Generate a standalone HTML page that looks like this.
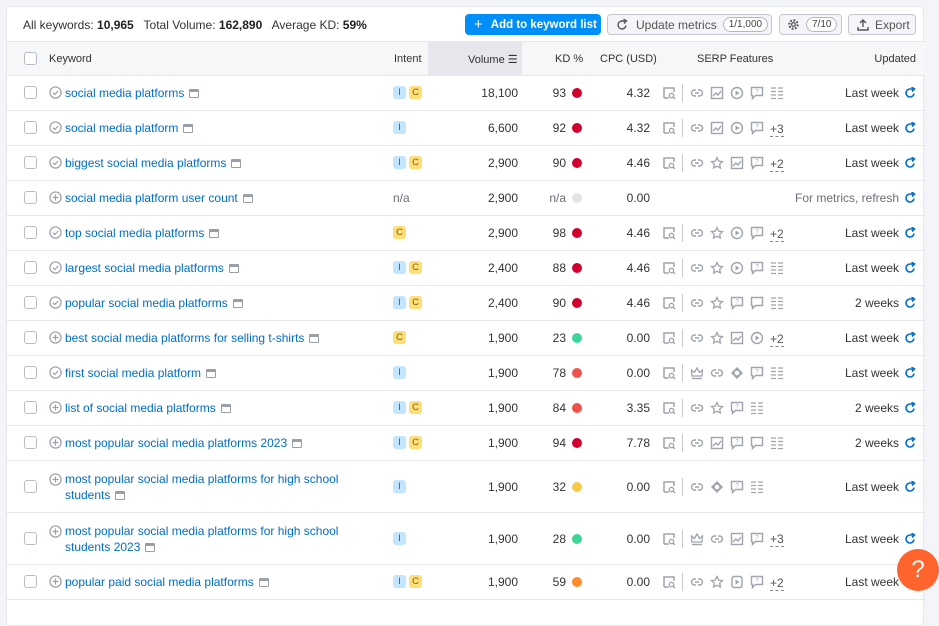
<!DOCTYPE html>
<html><head><meta charset="utf-8"><style>
*{box-sizing:border-box;margin:0;padding:0}
body{width:939px;height:604px;overflow:hidden;background:#f4f5f9;font-family:"Liberation Sans",sans-serif;font-size:12px;color:#333}
.card{position:absolute;left:6px;top:6px;width:918px;height:620px;background:#fff;border:1px solid #e6e7eb;border-radius:4px}
.tb{position:absolute;left:0;top:0;width:918px;height:34px}
.stats{position:absolute;left:16px;top:11px;font-size:12px;color:#333}
.stats b{color:#222}
.btn{position:absolute;top:7px;height:21px;border-radius:4px;font-size:12px;display:flex;align-items:center;white-space:nowrap}
.blue{left:458px;width:136px;background:#008ff8;color:#fff;font-weight:bold;padding-left:9px;font-size:11.5px}
.gb{border:1px solid #c4c7cf;background:#f4f5f9;color:#555}
.pill{border:1px solid #b5b8c0;border-radius:9px;font-size:10px;padding:1px 5px;background:#fff;margin-left:6px;color:#444}
.hdr{position:absolute;left:0;top:34px;width:918px;height:35px;background:#f6f7f9;border-top:1px solid #e6e7eb;border-bottom:1px solid #e6e7eb;font-size:11px;color:#333}
.hdr span{position:absolute;top:11px}
.volh{position:absolute;left:421px;top:0;width:94px;height:34px;background:#e6e7ec}
.row{position:absolute;left:0;width:918px;border-bottom:1px solid #e6e7eb}
.row>*{position:absolute}
.cb{position:absolute;left:17px;width:13px;height:13px;border:1px solid #b8bbc2;border-radius:3px;background:#fff;top:50%;margin-top:-7px}
.ki{left:42px;width:13px;height:13px;top:10px}
.kw{left:58px;top:9px;color:#006dca;line-height:16px;width:290px}
.tall .kw{top:10px}
.tall .ki{top:12px}
.sv{display:inline-block;width:10px;height:9px;border:1px solid #9a9ea6;border-top-width:3px;border-radius:1px;vertical-align:-1px;margin-left:5px}
.int{left:386px;top:50%;margin-top:-7px;display:flex;gap:3px}
.bI,.bC{width:13px;height:13px;border-radius:3px;font-size:9.5px;line-height:13px;text-align:center}
.bI{background:#c4e5fe;color:#006dca}
.bC{background:#fcdf78;color:#8a5b00}
.na{left:386px;top:50%;margin-top:-7px;color:#6c6e79}
.vol{left:421px;width:90px;text-align:right;top:50%;margin-top:-7px}
.kd{left:515px;width:44px;text-align:right;top:50%;margin-top:-7px}
.dot{left:565px;width:10px;height:10px;border-radius:50%;top:50%;margin-top:-5px}
.cpc{left:579px;width:64px;text-align:right;top:50%;margin-top:-7px}
.serp{left:655px;top:50%;margin-top:-8px;display:flex;align-items:center;height:16px}
.serp svg{width:14px;height:14px;margin-right:6px}
.sep{width:1px;height:18px;background:#c8cad0;margin:0 7px 0 0}
.more{font-size:12px;color:#555;border-bottom:1px dashed #888;line-height:13px;margin-top:3px}
.upd{right:9px;top:50%;margin-top:-7px;display:flex;align-items:center;gap:5px}
.upd svg{width:12px;height:12px}
.help{position:absolute;left:897px;top:549px;width:42px;height:42px;border-radius:50%;background:#ff642d;color:#fff;font-size:24px;text-align:center;line-height:42px}
</style></head><body>
<svg width="0" height="0" style="position:absolute">
<defs>
<symbol id="sn" viewBox="0 0 14 14"><path d="M2 12V2h10v4M2 12h5" fill="none" stroke="#a0a4ad" stroke-width="1.5"/><circle cx="9.5" cy="9.5" r="2.2" fill="none" stroke="#a0a4ad" stroke-width="1.3"/><path d="M11 11l2 2" stroke="#a0a4ad" stroke-width="1.3"/></symbol>
<symbol id="ln" viewBox="0 0 14 14"><path d="M6 4H4.5a3 3 0 000 6H6M8 4h1.5a3 3 0 010 6H8M5 7h4" fill="none" stroke="#a0a4ad" stroke-width="1.4"/></symbol>
<symbol id="im" viewBox="0 0 14 14"><rect x="1.5" y="1.5" width="11" height="11" fill="none" stroke="#a0a4ad" stroke-width="1.4"/><path d="M3 10l3-3 2 2 3-4" fill="none" stroke="#a0a4ad" stroke-width="1.4"/></symbol>
<symbol id="pl" viewBox="0 0 14 14"><circle cx="7" cy="7" r="5.5" fill="none" stroke="#a0a4ad" stroke-width="1.4"/><path d="M5.5 4.5v5l4-2.5z" fill="#a0a4ad"/></symbol>
<symbol id="fq" viewBox="0 0 14 14"><path d="M1.5 1.5h11v8h-7l-3 3v-3h-1z" fill="none" stroke="#a0a4ad" stroke-width="1.4"/><text x="7" y="7.5" font-size="6" text-anchor="middle" fill="#a0a4ad" font-family="Liberation Sans">?</text></symbol>
<symbol id="cm" viewBox="0 0 14 14"><path d="M1.5 1.5h11v8h-7l-3 3v-3h-1z" fill="none" stroke="#a0a4ad" stroke-width="1.4"/></symbol>
<symbol id="ls" viewBox="0 0 14 14"><path d="M1 2h5M8 2h5M1 5.5h5M8 5.5h5M1 9h5M8 9h5M1 12.5h5M8 12.5h5" stroke="#a0a4ad" stroke-width="1.3"/></symbol>
<symbol id="st" viewBox="0 0 14 14"><path d="M7 1.5l1.7 3.6 3.8.5-2.8 2.6.7 3.8L7 10.2 3.6 12l.7-3.8L1.5 5.6l3.8-.5z" fill="none" stroke="#a0a4ad" stroke-width="1.3"/></symbol>
<symbol id="cr" viewBox="0 0 14 14"><path d="M2 10L1.5 4l3 2.5L7 2l2.5 4.5 3-2.5L12 10z" fill="none" stroke="#a0a4ad" stroke-width="1.3"/><path d="M2 12.5h10" stroke="#a0a4ad" stroke-width="1.4"/></symbol>
<symbol id="dm" viewBox="0 0 14 14"><path d="M7 1l6 6-6 6-6-6z" fill="#a0a4ad"/><circle cx="7" cy="7" r="2.3" fill="#fff"/></symbol>
<symbol id="vd" viewBox="0 0 14 14"><rect x="2" y="1.5" width="10" height="11" rx="2" fill="none" stroke="#a0a4ad" stroke-width="1.4"/><path d="M5.5 4.5v5l4-2.5z" fill="#a0a4ad"/></symbol>
<symbol id="ck" viewBox="0 0 14 14"><circle cx="7" cy="7" r="6" fill="none" stroke="#9a9ea6" stroke-width="1.3"/><path d="M4.2 7.2l2 2 3.6-3.8" fill="none" stroke="#9a9ea6" stroke-width="1.3"/></symbol>
<symbol id="pc" viewBox="0 0 14 14"><circle cx="7" cy="7" r="6" fill="none" stroke="#9a9ea6" stroke-width="1.3"/><path d="M7 3.8v6.4M3.8 7h6.4" stroke="#9a9ea6" stroke-width="1.3"/></symbol>
<symbol id="rf" viewBox="0 0 12 12"><path d="M10 6.5A4 4 0 116 2h3" fill="none" stroke="#006dca" stroke-width="1.6"/><path d="M7.5 0l3 2-2.5 2.5" fill="none" stroke="#006dca" stroke-width="1.6"/></symbol>
</defs></svg>
<div class="card">
<div class="tb">
<div class="stats">All keywords: <b>10,965</b> &nbsp; Total Volume: <b>162,890</b> &nbsp; Average KD: <b>59%</b></div>
<div class="btn blue"><span style="font-size:15px;font-weight:normal;margin-right:8px">+</span>Add to keyword list</div>
<div class="btn gb" style="left:600px;width:165px;padding-left:8px"><svg width="12" height="12" viewBox="0 0 12 12" style="margin-right:8px"><path d="M10 6.5A4 4 0 116 2h3" fill="none" stroke="#555" stroke-width="1.4"/><path d="M7.5 0l3 2-2.5 2.5" fill="none" stroke="#555" stroke-width="1.4"/></svg>Update metrics<span class="pill">1/1,000</span></div>
<div class="btn gb" style="left:772px;width:63px;padding-left:7px"><svg width="13" height="13" viewBox="0 0 14 14"><circle cx="7" cy="7" r="4.5" fill="none" stroke="#555" stroke-width="2.2" stroke-dasharray="2 1.5"/><circle cx="7" cy="7" r="2" fill="none" stroke="#555" stroke-width="1.3"/></svg><span class="pill">7/10</span></div>
<div class="btn gb" style="left:841px;width:68px;padding-left:8px"><svg width="12" height="12" viewBox="0 0 12 12" style="margin-right:6px"><path d="M6 8V1M3 4l3-3 3 3M1 8v3h10V8" fill="none" stroke="#555" stroke-width="1.4"/></svg>Export</div>
</div>
<div class="hdr"><div class="volh"></div><div class="cb"></div>
<span style="left:42px">Keyword</span><span style="left:387px">Intent</span><span style="left:461px">Volume <span style="position:static;letter-spacing:-1px">☰</span></span><span style="left:548px">KD %</span><span style="left:593px">CPC (USD)</span><span style="left:690px">SERP Features</span><span style="right:9px">Updated</span></div>

<div id="rows"></div>
</div>
<div class="help">?</div>
<script>
var R=[
["social media platforms","ck","IC","18,100","93","#d1002f","4.32","sn|ln im pl fq ls","Last week",0],
["social media platform","ck","I","6,600","92","#d1002f","4.32","sn|ln im pl fq +3","Last week",0],
["biggest social media platforms","ck","IC","2,900","90","#d1002f","4.46","sn|ln st im fq +2","Last week",0],
["social media platform user count","pc","n","2,900","n/a","#e2e3e6","0.00","","For metrics, refresh",0],
["top social media platforms","ck","C","2,900","98","#d1002f","4.46","sn|ln st pl fq +2","Last week",0],
["largest social media platforms","ck","IC","2,400","88","#d1002f","4.46","sn|ln st pl fq ls","Last week",0],
["popular social media platforms","ck","IC","2,400","90","#d1002f","4.46","sn|ln st fq cm ls","2 weeks",0],
["best social media platforms for selling t-shirts","pc","C","1,900","23","#3dd597","0.00","sn|ln st im pl +2","Last week",0],
["first social media platform","ck","I","1,900","78","#f0514b","0.00","sn|cr ln dm fq ls","Last week",0],
["list of social media platforms","pc","IC","1,900","84","#f0514b","3.35","sn|ln st fq ls","2 weeks",0],
["most popular social media platforms 2023","pc","IC","1,900","94","#d1002f","7.78","sn|ln im fq cm ls","2 weeks",0],
["most popular social media platforms for high school students","pc","I","1,900","32","#f7c948","0.00","sn|ln dm fq ls","Last week",1],
["most popular social media platforms for high school students 2023","pc","I","1,900","28","#3dd597","0.00","sn|cr ln im fq +3","Last week",1],
["popular paid social media platforms","pc","IC","1,900","59","#ff8c2b","0.00","sn|ln st vd fq +2","Last week",0]];
var y=69,h='';
R.forEach(function(r){var H=r[9]?52:35;
var s='<div class="row'+(r[9]?' tall':'')+'" style="top:'+y+'px;height:'+H+'px"><div class="cb"></div>';
s+='<svg class="ki"><use href="#'+r[1]+'"/></svg><div class="kw">'+r[0]+'<span class="sv"></span></div>';
if(r[2]=='n')s+='<div class="na">n/a</div>';else{s+='<div class="int">';if(r[2].indexOf('I')>=0)s+='<div class="bI">I</div>';if(r[2].indexOf('C')>=0)s+='<div class="bC">C</div>';s+='</div>';}
s+='<div class="vol">'+r[3]+'</div><div class="kd"'+(r[4]=='n/a'?' style="color:#6c6e79"':'')+'>'+r[4]+'</div><div class="dot" style="background:'+r[5]+'"></div><div class="cpc">'+r[6]+'</div>';
if(r[7]){s+='<div class="serp">';r[7].replace('|',' | ').split(' ').forEach(function(t){if(t=='|')s+='<div class="sep"></div>';else if(t[0]=='+')s+='<span class="more">'+t+'</span>';else s+='<svg><use href="#'+t+'"/></svg>';});s+='</div>';}
s+='<div class="upd"><span'+(r[8][0]=='F'?' style="color:#6c6e79"':'')+'>'+r[8]+'</span><svg><use href="#rf"/></svg></div></div>';
h+=s;y+=H;});
document.getElementById('rows').innerHTML=h;
</script>
</body></html>
